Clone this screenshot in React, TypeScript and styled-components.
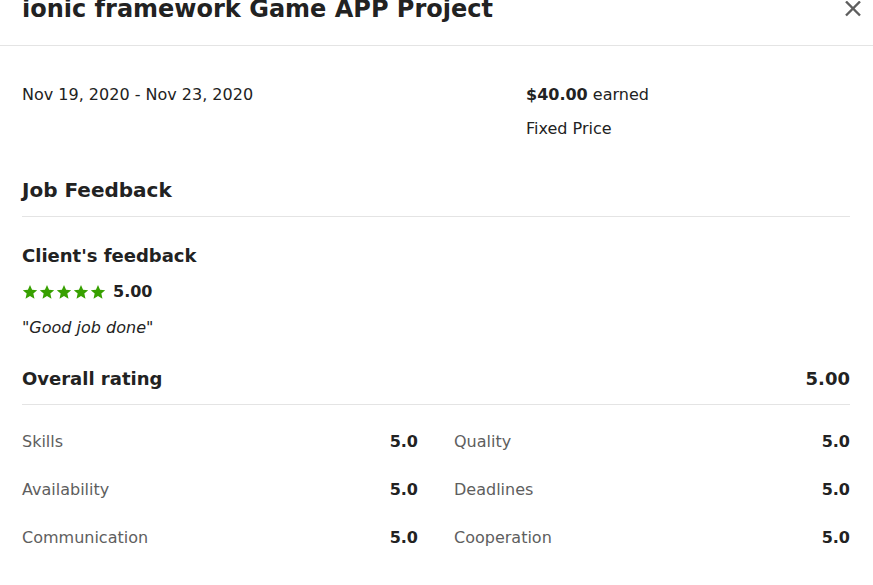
import styled, { createGlobalStyle } from "styled-components";

const GlobalStyle = createGlobalStyle`
  body {
    margin: 0;
    background: #ffffff;
    font-family: "DejaVu Sans", "Open Sans", sans-serif;
    color: #222222;
  }
`;

const Modal = styled.div`
  width: 873px;
  height: 585px;
  overflow: hidden;
  background: #fff;
`;

const Header = styled.header`
  height: 46px;
  box-sizing: border-box;
  border-bottom: 1px solid #e4e4e4;
  display: flex;
  justify-content: space-between;
  align-items: flex-start;
  padding: 0 11px 0 22px;
`;

const Title = styled.h2`
  margin: -7px 0 0;
  font-size: 24px;
  line-height: 32px;
  font-weight: 700;
  color: #222;
`;

const CloseButton = styled.button`
  border: 0;
  background: none;
  padding: 0;
  margin-top: 1px;
  width: 18px;
  height: 16px;
  cursor: pointer;
  color: #5e5e5e;
  display: flex;
`;

const Body = styled.div`
  padding: 0 23px 0 22px;
`;

const Summary = styled.div`
  display: grid;
  grid-template-columns: 504px 1fr;
  padding-top: 37px;
`;

const Text = styled.div<{ $size?: number; $bold?: boolean; $muted?: boolean }>`
  font-size: ${(p) => p.$size ?? 16}px;
  font-weight: ${(p) => (p.$bold ? 700 : 400)};
  color: ${(p) => (p.$muted ? "#5e5e5e" : "#222")};
  line-height: 24px;
`;

const StackCol = styled.div`
  display: flex;
  flex-direction: column;
  gap: 10px;
`;

const SectionTitle = styled.h3`
  margin: 35px 0 0;
  padding-bottom: 12px;
  font-size: 20px;
  line-height: 28px;
  font-weight: 700;
  border-bottom: 1px solid #e4e4e4;
`;

const SubTitle = styled.h4`
  margin: 26px 0 0;
  font-size: 18px;
  line-height: 26px;
  font-weight: 700;
`;

const StarRow = styled.div`
  display: flex;
  align-items: center;
  gap: 7px;
  margin-top: 11px;
`;

const Stars = styled.div`
  display: flex;
  gap: 1px;
  color: #37a000;
`;

const Quote = styled.p`
  margin: 12px 0 0;
  font-size: 16px;
  line-height: 24px;
  font-style: italic;
  color: #222;
`;

const OverallRow = styled.div`
  display: flex;
  justify-content: space-between;
  align-items: center;
  margin-top: 27px;
  padding-bottom: 13px;
  border-bottom: 1px solid #e4e4e4;
`;

const ScoreGrid = styled.div`
  display: grid;
  grid-template-columns: 1fr 1fr;
  column-gap: 36px;
  row-gap: 24px;
  padding-top: 25px;
`;

const ScoreRow = styled.div`
  display: flex;
  justify-content: space-between;
  align-items: center;
`;

const Star = () => (
  <svg width="16" height="16" viewBox="0 0 24 24" fill="currentColor">
    <path d="M12 1.5l3.1 7.1 7.7.7-5.8 5.1 1.7 7.6L12 18l-6.7 4 1.7-7.6L1.2 9.3l7.7-.7z" />
  </svg>
);

const scores: [string, string][] = [
  ["Skills", "Quality"],
  ["Availability", "Deadlines"],
  ["Communication", "Cooperation"],
];

export default function App() {
  return (
    <Modal>
      <GlobalStyle />
      <Header>
        <Title>ionic framework Game APP Project</Title>
        <CloseButton aria-label="Close">
          <svg width="18" height="16" viewBox="0 0 18 16" fill="none" stroke="currentColor" strokeWidth="2.4">
            <path d="M2 0.5L16 14.5M16 0.5L2 14.5" />
          </svg>
        </CloseButton>
      </Header>
      <Body>
        <Summary>
          <Text>Nov 19, 2020 - Nov 23, 2020</Text>
          <StackCol>
            <Text>
              <b>$40.00</b> earned
            </Text>
            <Text>Fixed Price</Text>
          </StackCol>
        </Summary>
        <SectionTitle>Job Feedback</SectionTitle>
        <SubTitle>Client's feedback</SubTitle>
        <StarRow>
          <Stars>
            {[0, 1, 2, 3, 4].map((i) => (
              <Star key={i} />
            ))}
          </Stars>
          <Text $bold>5.00</Text>
        </StarRow>
        <Quote>"Good job done"</Quote>
        <OverallRow>
          <Text $size={18} $bold>Overall rating</Text>
          <Text $size={18} $bold>5.00</Text>
        </OverallRow>
        <ScoreGrid>
          {scores.map(([a, b]) => [
            <ScoreRow key={a}>
              <Text $muted>{a}</Text>
              <Text $bold>5.0</Text>
            </ScoreRow>,
            <ScoreRow key={b}>
              <Text $muted>{b}</Text>
              <Text $bold>5.0</Text>
            </ScoreRow>,
          ])}
        </ScoreGrid>
      </Body>
    </Modal>
  );
}
